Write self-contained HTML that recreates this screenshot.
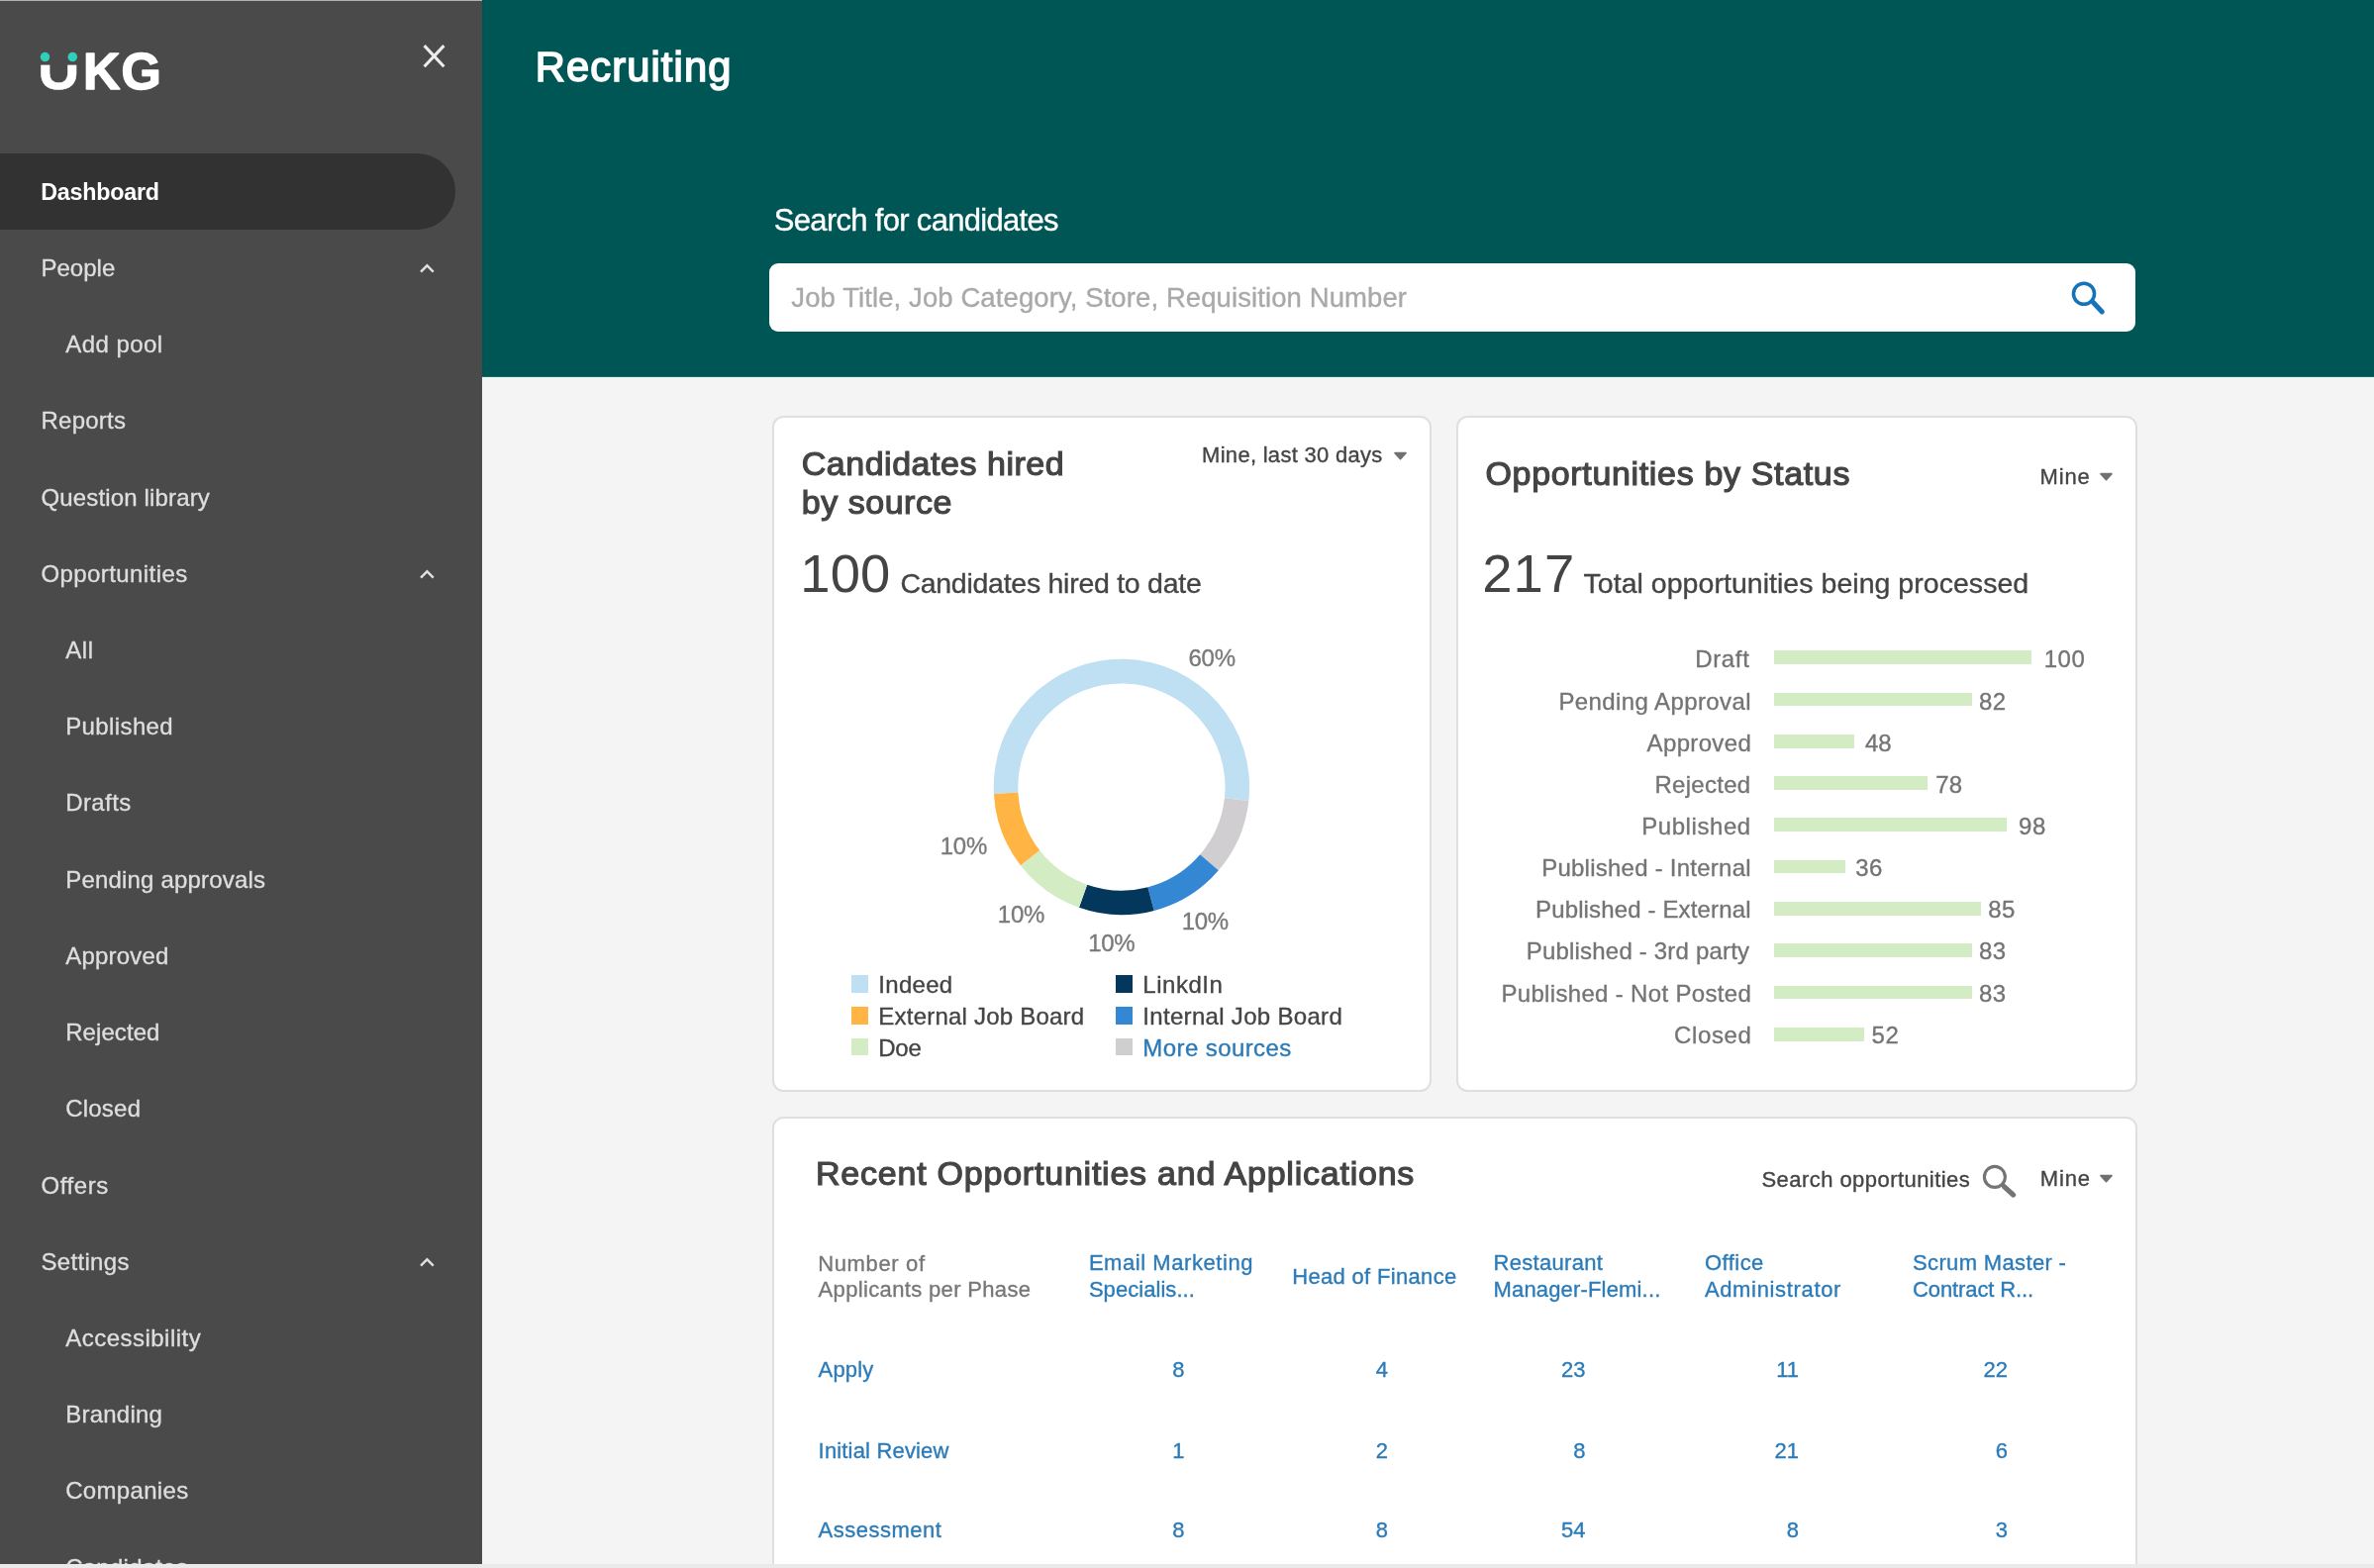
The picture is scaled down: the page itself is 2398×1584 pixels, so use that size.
<!DOCTYPE html>
<html lang="en"><head><meta charset="utf-8"><title>Recruiting</title>
<style>
html,body{margin:0;padding:0}
body{width:2398px;height:1584px;overflow:hidden;background:#f4f4f4;font-family:"Liberation Sans",sans-serif;position:relative}
#root{position:absolute;left:0;top:0;width:2398px;height:1584px;overflow:hidden;will-change:transform}
.t{position:absolute;white-space:nowrap;line-height:1;-webkit-text-stroke:0.35px}
.card{position:absolute;box-sizing:border-box;background:#fff;border:2.4px solid #dfdfdf;border-radius:11.5px}
i{display:block}
</style></head><body><div id="root">
<nav>
<div id="side" style="position:absolute;left:0;top:0;width:487px;height:1584px;background:#4a4a4a;overflow:hidden"></div>
<div style="position:absolute;left:0;top:0;width:487px;height:1.2px;background:#b2b2b2"></div>
<div style="position:absolute;left:0;top:154.8px;width:459.6px;height:77.3px;background:#323232;border-radius:0 38.65px 38.65px 0"></div>
<span class="t" style="top:182.88px;font-size:23.3px;color:#ffffff;font-weight:700;letter-spacing:-0.238px;left:41.20px;-webkit-text-stroke:0;">Dashboard</span>
<span class="t" style="top:258.90px;font-size:24px;color:#dedede;left:41.50px;">People</span>
<svg style="position:absolute;left:417.1px;top:257.07px" width="28.8" height="28.8" viewBox="0 0 24 24"><path d="M12 8l-6 6 1.41 1.41L12 10.83l4.59 4.58L18 14z" fill="#e0e0e0"/></svg>
<span class="t" style="top:336.12px;font-size:24px;color:#dedede;letter-spacing:0.457px;left:66.20px;">Add pool</span>
<span class="t" style="top:413.34px;font-size:24px;color:#dedede;letter-spacing:0.233px;left:41.50px;">Reports</span>
<span class="t" style="top:490.56px;font-size:24px;color:#dedede;letter-spacing:0.153px;left:41.50px;">Question library</span>
<span class="t" style="top:567.78px;font-size:24px;color:#dedede;letter-spacing:0.408px;left:41.50px;">Opportunities</span>
<svg style="position:absolute;left:417.1px;top:565.95px" width="28.8" height="28.8" viewBox="0 0 24 24"><path d="M12 8l-6 6 1.41 1.41L12 10.83l4.59 4.58L18 14z" fill="#e0e0e0"/></svg>
<span class="t" style="top:645.00px;font-size:24px;color:#dedede;letter-spacing:0.65px;left:66.20px;">All</span>
<span class="t" style="top:722.22px;font-size:24px;color:#dedede;letter-spacing:0.387px;left:66.20px;">Published</span>
<span class="t" style="top:799.44px;font-size:24px;color:#dedede;letter-spacing:0.4px;left:66.20px;">Drafts</span>
<span class="t" style="top:876.66px;font-size:24px;color:#dedede;letter-spacing:0.194px;left:66.20px;">Pending approvals</span>
<span class="t" style="top:953.88px;font-size:24px;color:#dedede;letter-spacing:0.214px;left:66.20px;">Approved</span>
<span class="t" style="top:1031.10px;font-size:24px;color:#dedede;letter-spacing:0.071px;left:66.20px;">Rejected</span>
<span class="t" style="top:1108.32px;font-size:24px;color:#dedede;letter-spacing:0.22px;left:66.20px;">Closed</span>
<span class="t" style="top:1185.54px;font-size:24px;color:#dedede;letter-spacing:0.58px;left:41.50px;">Offers</span>
<span class="t" style="top:1262.76px;font-size:24px;color:#dedede;letter-spacing:0.314px;left:41.50px;">Settings</span>
<svg style="position:absolute;left:417.1px;top:1260.93px" width="28.8" height="28.8" viewBox="0 0 24 24"><path d="M12 8l-6 6 1.41 1.41L12 10.83l4.59 4.58L18 14z" fill="#e0e0e0"/></svg>
<span class="t" style="top:1339.98px;font-size:24px;color:#dedede;letter-spacing:0.483px;left:66.20px;">Accessibility</span>
<span class="t" style="top:1417.20px;font-size:24px;color:#dedede;letter-spacing:0.229px;left:66.20px;">Branding</span>
<span class="t" style="top:1494.42px;font-size:24px;color:#dedede;letter-spacing:0.325px;left:66.20px;">Companies</span>
<span class="t" style="top:1571.64px;font-size:24px;color:#dedede;letter-spacing:0.25px;left:66.20px;">Candidates</span>
<svg style="position:absolute;left:422px;top:40px" width="34" height="34" viewBox="0 0 34 34"><path d="M6.6 6.1 L26.4 27.3 M26.4 6.1 L6.6 27.3" fill="none" stroke="#ececec" stroke-width="3.1"/></svg>
<svg role="img" aria-label="UKG" style="position:absolute;left:0;top:0" width="200" height="120" viewBox="0 0 200 120" font-family="Liberation Sans, sans-serif" font-weight="700" font-size="51.8" fill="#fff" stroke="#fff" stroke-width="1.5" stroke-linejoin="round">
<text y="90.4"><tspan x="37.9" font-size="59" stroke-width="0.5">U</tspan><tspan x="83.9" letter-spacing="1.2">KG</tspan></text>
<rect x="30" y="40" width="56" height="25.6" fill="#4a4a4a" stroke="none"/>
<circle cx="45.5" cy="57.6" r="4.75" fill="#30cebb" stroke="none"/><circle cx="73.3" cy="57.6" r="4.75" fill="#30cebb" stroke="none"/>
</svg>
</nav>
<header>
<div style="position:absolute;left:487px;top:0;width:1911px;height:381px;background:#005555"></div>
<div style="position:absolute;left:487px;top:380px;width:1911px;height:1px;background:#0e7563"></div>
<span class="t" style="top:47.49px;font-size:41.6px;color:#fff;letter-spacing:1.144px;left:540.80px;-webkit-text-stroke:1.6px #fff;">Recruiting</span>
<span class="t" style="top:206.76px;font-size:31px;color:#fff;letter-spacing:-0.69px;left:781.80px;">Search for candidates</span>
<div style="position:absolute;left:777px;top:266px;width:1380px;height:69px;background:#fff;border-radius:9px"></div>
<span class="t" style="top:286.92px;font-size:27.5px;color:#a9a9a9;letter-spacing:0.096px;left:799.30px;">Job Title, Job Category, Store, Requisition Number</span>
<svg style="position:absolute;left:2088px;top:280px" width="42" height="42" viewBox="0 0 42 42"><circle cx="17" cy="16.8" r="10.55" fill="none" stroke="#1573b9" stroke-width="3.5"/><path d="M26.4 25.6 L35.3 34.9" stroke="#1573b9" stroke-width="5" stroke-linecap="round"/></svg>
</header>
<main>
<div class="card" style="left:779.5px;top:420.1px;width:666.4px;height:682.7px"></div>
<div class="card" style="left:1470.9px;top:420.1px;width:687.9px;height:682.7px"></div>
<div class="card" style="left:779.5px;top:1127.6px;width:1379.3px;height:500px"></div>
<span class="t" style="top:451.42px;font-size:34px;color:#444;letter-spacing:0.527px;left:809.70px;-webkit-text-stroke:1.2px #444;">Candidates hired</span>
<span class="t" style="top:490.32px;font-size:34px;color:#444;letter-spacing:0.537px;left:809.70px;-webkit-text-stroke:1.2px #444;">by source</span>
<span class="t" style="top:449.18px;font-size:22px;color:#444;letter-spacing:0.282px;left:1214.10px;">Mine, last 30 days</span>
<svg style="position:absolute;left:1406.8px;top:456.0px" width="16" height="10" viewBox="0 0 16 10"><path d="M2 1.6 H13 L7.5 7.6 Z" fill="#707070" stroke="#707070" stroke-width="1.6" stroke-linejoin="round"/></svg>
<span class="t" style="top:553.25px;font-size:54.4px;color:#444;letter-spacing:0.15px;left:808.30px;-webkit-text-stroke:0;">100</span>
<span class="t" style="top:575.17px;font-size:28.5px;color:#444;letter-spacing:-0.27px;left:909.40px;">Candidates hired to date</span>
<svg style="position:absolute;left:0;top:0" width="2398" height="1584" viewBox="0 0 2398 1584"><path d="M1003.89 801.99 A129.2 129.2 0 1 1 1261.34 808.95 L1236.89 806.30 A104.6 104.6 0 1 0 1028.45 800.66 Z" fill="#bfdff3"/><path d="M1261.34 808.95 A129.2 129.2 0 0 1 1230.85 879.25 L1212.20 863.21 A104.6 104.6 0 0 0 1236.89 806.30 Z" fill="#d0ced0"/><path d="M1230.85 879.25 A129.2 129.2 0 0 1 1165.69 919.97 L1159.44 896.18 A104.6 104.6 0 0 0 1212.20 863.21 Z" fill="#3387d3"/><path d="M1165.69 919.97 A129.2 129.2 0 0 1 1089.98 916.86 L1098.16 893.66 A104.6 104.6 0 0 0 1159.44 896.18 Z" fill="#04375c"/><path d="M1089.98 916.86 A129.2 129.2 0 0 1 1030.81 874.19 L1050.25 859.11 A104.6 104.6 0 0 0 1098.16 893.66 Z" fill="#d4ecc4"/><path d="M1030.81 874.19 A129.2 129.2 0 0 1 1003.89 801.99 L1028.45 800.66 A104.6 104.6 0 0 0 1050.25 859.11 Z" fill="#ffb443"/></svg>
<span class="t" style="top:653.08px;font-size:24px;color:#7a7a7a;letter-spacing:-0.3px;left:1200.55px;">60%</span>
<span class="t" style="top:842.98px;font-size:24px;color:#7a7a7a;letter-spacing:-0.3px;left:949.80px;">10%</span>
<span class="t" style="top:911.68px;font-size:24px;color:#7a7a7a;letter-spacing:-0.3px;left:1007.85px;">10%</span>
<span class="t" style="top:941.18px;font-size:24px;color:#7a7a7a;letter-spacing:-0.3px;left:1099.25px;">10%</span>
<span class="t" style="top:918.88px;font-size:24px;color:#7a7a7a;letter-spacing:-0.3px;left:1193.65px;">10%</span>
<i style="position:absolute;left:859.6px;top:985.3px;width:17.8px;height:17.8px;background:#bfdff3"></i>
<span class="t" style="top:983.18px;font-size:24px;color:#444;letter-spacing:0.3px;left:887.30px;">Indeed</span>
<i style="position:absolute;left:859.6px;top:1017px;width:17.8px;height:17.8px;background:#ffb443"></i>
<span class="t" style="top:1014.88px;font-size:24px;color:#444;letter-spacing:0.218px;left:887.30px;">External Job Board</span>
<i style="position:absolute;left:859.6px;top:1048.7px;width:17.8px;height:17.8px;background:#d4ecc4"></i>
<span class="t" style="top:1046.58px;font-size:24px;color:#444;letter-spacing:-0.3px;left:887.30px;">Doe</span>
<i style="position:absolute;left:1126.6px;top:985.3px;width:17.8px;height:17.8px;background:#04375c"></i>
<span class="t" style="top:983.18px;font-size:24px;color:#444;letter-spacing:0.533px;left:1154.30px;">LinkdIn</span>
<i style="position:absolute;left:1126.6px;top:1017px;width:17.8px;height:17.8px;background:#3387d3"></i>
<span class="t" style="top:1014.88px;font-size:24px;color:#444;letter-spacing:0.312px;left:1154.30px;">Internal Job Board</span>
<i style="position:absolute;left:1126.6px;top:1048.7px;width:17.8px;height:17.8px;background:#d0ced0"></i>
<span class="t" style="top:1046.58px;font-size:24px;color:#2a7ab8;letter-spacing:0.418px;left:1154.30px;">More sources</span>
<span class="t" style="top:460.62px;font-size:34px;color:#444;letter-spacing:0.659px;left:1500.50px;-webkit-text-stroke:1.2px #444;">Opportunities by Status</span>
<span class="t" style="top:470.78px;font-size:22px;color:#444;letter-spacing:0.833px;left:2060.50px;">Mine</span>
<svg style="position:absolute;left:2120px;top:476.9px" width="16" height="10" viewBox="0 0 16 10"><path d="M2 1.6 H13 L7.5 7.6 Z" fill="#707070" stroke="#707070" stroke-width="1.6" stroke-linejoin="round"/></svg>
<span class="t" style="top:553.25px;font-size:54.4px;color:#444;letter-spacing:1.05px;left:1497.30px;-webkit-text-stroke:0;">217</span>
<span class="t" style="top:575.17px;font-size:28.5px;color:#444;letter-spacing:0.038px;left:1599.50px;">Total opportunities being processed</span>
<i style="position:absolute;left:1792px;top:657.20px;width:260px;height:13.7px;background:#d4ecc4"></i>
<span class="t" style="top:654.48px;font-size:24px;color:#747474;letter-spacing:0.65px;left:1712.20px;">Draft</span>
<span class="t" style="top:654.48px;font-size:24px;color:#747474;letter-spacing:0.5px;left:2064.70px;">100</span>
<i style="position:absolute;left:1792px;top:699.52px;width:200.2px;height:13.7px;background:#d4ecc4"></i>
<span class="t" style="top:696.62px;font-size:24px;color:#747474;letter-spacing:0.4px;left:1574.40px;">Pending Approval</span>
<span class="t" style="top:696.62px;font-size:24px;color:#747474;letter-spacing:0.5px;left:1998.95px;">82</span>
<i style="position:absolute;left:1792px;top:741.84px;width:81px;height:13.7px;background:#d4ecc4"></i>
<span class="t" style="top:738.76px;font-size:24px;color:#747474;letter-spacing:0.343px;left:1663.60px;">Approved</span>
<span class="t" style="top:738.76px;font-size:24px;color:#747474;letter-spacing:-0.2px;left:1884.00px;">48</span>
<i style="position:absolute;left:1792px;top:784.16px;width:154.7px;height:13.7px;background:#d4ecc4"></i>
<span class="t" style="top:780.90px;font-size:24px;color:#747474;letter-spacing:0.286px;left:1671.40px;">Rejected</span>
<span class="t" style="top:780.90px;font-size:24px;color:#747474;letter-spacing:0.1px;left:1955.20px;">78</span>
<i style="position:absolute;left:1792px;top:826.48px;width:235.4px;height:13.7px;background:#d4ecc4"></i>
<span class="t" style="top:823.04px;font-size:24px;color:#747474;letter-spacing:0.575px;left:1658.20px;">Published</span>
<span class="t" style="top:823.04px;font-size:24px;color:#747474;letter-spacing:0.5px;left:2039.10px;">98</span>
<i style="position:absolute;left:1792px;top:868.80px;width:72.2px;height:13.7px;background:#d4ecc4"></i>
<span class="t" style="top:865.18px;font-size:24px;color:#747474;letter-spacing:0.242px;left:1557.20px;">Published - Internal</span>
<span class="t" style="top:865.18px;font-size:24px;color:#747474;letter-spacing:0.5px;left:1874.25px;">36</span>
<i style="position:absolute;left:1792px;top:911.12px;width:209px;height:13.7px;background:#d4ecc4"></i>
<span class="t" style="top:907.32px;font-size:24px;color:#747474;letter-spacing:0.142px;left:1551.00px;">Published - External</span>
<span class="t" style="top:907.32px;font-size:24px;color:#747474;letter-spacing:0.5px;left:2008.25px;">85</span>
<i style="position:absolute;left:1792px;top:953.44px;width:200.2px;height:13.7px;background:#d4ecc4"></i>
<span class="t" style="top:949.46px;font-size:24px;color:#747474;letter-spacing:0.19px;left:1541.80px;">Published - 3rd party</span>
<span class="t" style="top:949.46px;font-size:24px;color:#747474;letter-spacing:0.5px;left:1998.95px;">83</span>
<i style="position:absolute;left:1792px;top:995.76px;width:200.2px;height:13.7px;background:#d4ecc4"></i>
<span class="t" style="top:991.60px;font-size:24px;color:#747474;letter-spacing:0.333px;left:1516.40px;">Published - Not Posted</span>
<span class="t" style="top:991.60px;font-size:24px;color:#747474;letter-spacing:0.5px;left:1998.95px;">83</span>
<i style="position:absolute;left:1792px;top:1038.08px;width:91.3px;height:13.7px;background:#d4ecc4"></i>
<span class="t" style="top:1033.74px;font-size:24px;color:#747474;letter-spacing:0.64px;left:1691.00px;">Closed</span>
<span class="t" style="top:1033.74px;font-size:24px;color:#747474;letter-spacing:0.5px;left:1890.60px;">52</span>
<span class="t" style="top:1168.42px;font-size:34px;color:#444;letter-spacing:0.775px;left:824.00px;-webkit-text-stroke:1.2px #444;">Recent Opportunities and Applications</span>
<span class="t" style="top:1180.68px;font-size:22px;color:#444;letter-spacing:0.453px;left:1779.40px;">Search opportunities</span>
<svg style="position:absolute;left:1998px;top:1173px" width="42" height="42" viewBox="0 0 42 42"><circle cx="16.9" cy="15.9" r="10.5" fill="none" stroke="#747474" stroke-width="3.1"/><path d="M26.6 25.8 L35.6 34.1" stroke="#747474" stroke-width="5.2" stroke-linecap="round"/></svg>
<span class="t" style="top:1179.88px;font-size:22px;color:#444;letter-spacing:0.833px;left:2060.80px;">Mine</span>
<svg style="position:absolute;left:2120px;top:1185.9px" width="16" height="10" viewBox="0 0 16 10"><path d="M2 1.6 H13 L7.5 7.6 Z" fill="#707070" stroke="#707070" stroke-width="1.6" stroke-linejoin="round"/></svg>
<span class="t" style="top:1265.58px;font-size:22px;color:#777;letter-spacing:0.638px;left:826.20px;">Number of</span>
<span class="t" style="top:1291.78px;font-size:22px;color:#777;letter-spacing:0.342px;left:826.60px;">Applicants per Phase</span>
<span class="t" style="top:1372.88px;font-size:22px;color:#2b7bb9;letter-spacing:0.15px;left:826.60px;">Apply</span>
<span class="t" style="top:1454.78px;font-size:22px;color:#2b7bb9;letter-spacing:0.169px;left:826.60px;">Initial Review</span>
<span class="t" style="top:1535.48px;font-size:22px;color:#2b7bb9;letter-spacing:0.5px;left:826.60px;">Assessment</span>
<span class="t" style="top:1265.38px;font-size:22px;color:#2b7bb9;letter-spacing:0.557px;left:1099.90px;">Email Marketing</span>
<span class="t" style="top:1291.58px;font-size:22px;color:#2b7bb9;letter-spacing:0.055px;left:1099.90px;">Specialis...</span>
<span class="t" style="top:1372.88px;font-size:22px;color:#2b7bb9;right:1201.50px;">8</span>
<span class="t" style="top:1454.78px;font-size:22px;color:#2b7bb9;right:1201.50px;">1</span>
<span class="t" style="top:1535.48px;font-size:22px;color:#2b7bb9;right:1201.50px;">8</span>
<span class="t" style="top:1279.18px;font-size:22px;color:#2b7bb9;letter-spacing:0.329px;left:1305.20px;">Head of Finance</span>
<span class="t" style="top:1372.88px;font-size:22px;color:#2b7bb9;right:996.00px;">4</span>
<span class="t" style="top:1454.78px;font-size:22px;color:#2b7bb9;right:996.00px;">2</span>
<span class="t" style="top:1535.48px;font-size:22px;color:#2b7bb9;right:996.00px;">8</span>
<span class="t" style="top:1265.38px;font-size:22px;color:#2b7bb9;letter-spacing:0.3px;left:1508.50px;">Restaurant</span>
<span class="t" style="top:1291.58px;font-size:22px;color:#2b7bb9;letter-spacing:0.167px;left:1508.50px;">Manager-Flemi...</span>
<span class="t" style="top:1372.88px;font-size:22px;color:#2b7bb9;right:796.50px;">23</span>
<span class="t" style="top:1454.78px;font-size:22px;color:#2b7bb9;right:796.50px;">8</span>
<span class="t" style="top:1535.48px;font-size:22px;color:#2b7bb9;right:796.50px;">54</span>
<span class="t" style="top:1265.38px;font-size:22px;color:#2b7bb9;letter-spacing:0.48px;left:1721.90px;">Office</span>
<span class="t" style="top:1291.58px;font-size:22px;color:#2b7bb9;letter-spacing:0.658px;left:1721.90px;">Administrator</span>
<span class="t" style="top:1372.88px;font-size:22px;color:#2b7bb9;right:581.00px;">11</span>
<span class="t" style="top:1454.78px;font-size:22px;color:#2b7bb9;right:581.00px;">21</span>
<span class="t" style="top:1535.48px;font-size:22px;color:#2b7bb9;right:581.00px;">8</span>
<span class="t" style="top:1265.38px;font-size:22px;color:#2b7bb9;letter-spacing:0.354px;left:1932.00px;">Scrum Master -</span>
<span class="t" style="top:1291.58px;font-size:22px;color:#2b7bb9;letter-spacing:-0.108px;left:1932.00px;">Contract R...</span>
<span class="t" style="top:1372.88px;font-size:22px;color:#2b7bb9;right:370.00px;">22</span>
<span class="t" style="top:1454.78px;font-size:22px;color:#2b7bb9;right:370.00px;">6</span>
<span class="t" style="top:1535.48px;font-size:22px;color:#2b7bb9;right:370.00px;">3</span>
</main>
<div style="position:absolute;left:0;top:1580px;width:2398px;height:4px;background:#e8eaec"></div>
</div></body></html>
